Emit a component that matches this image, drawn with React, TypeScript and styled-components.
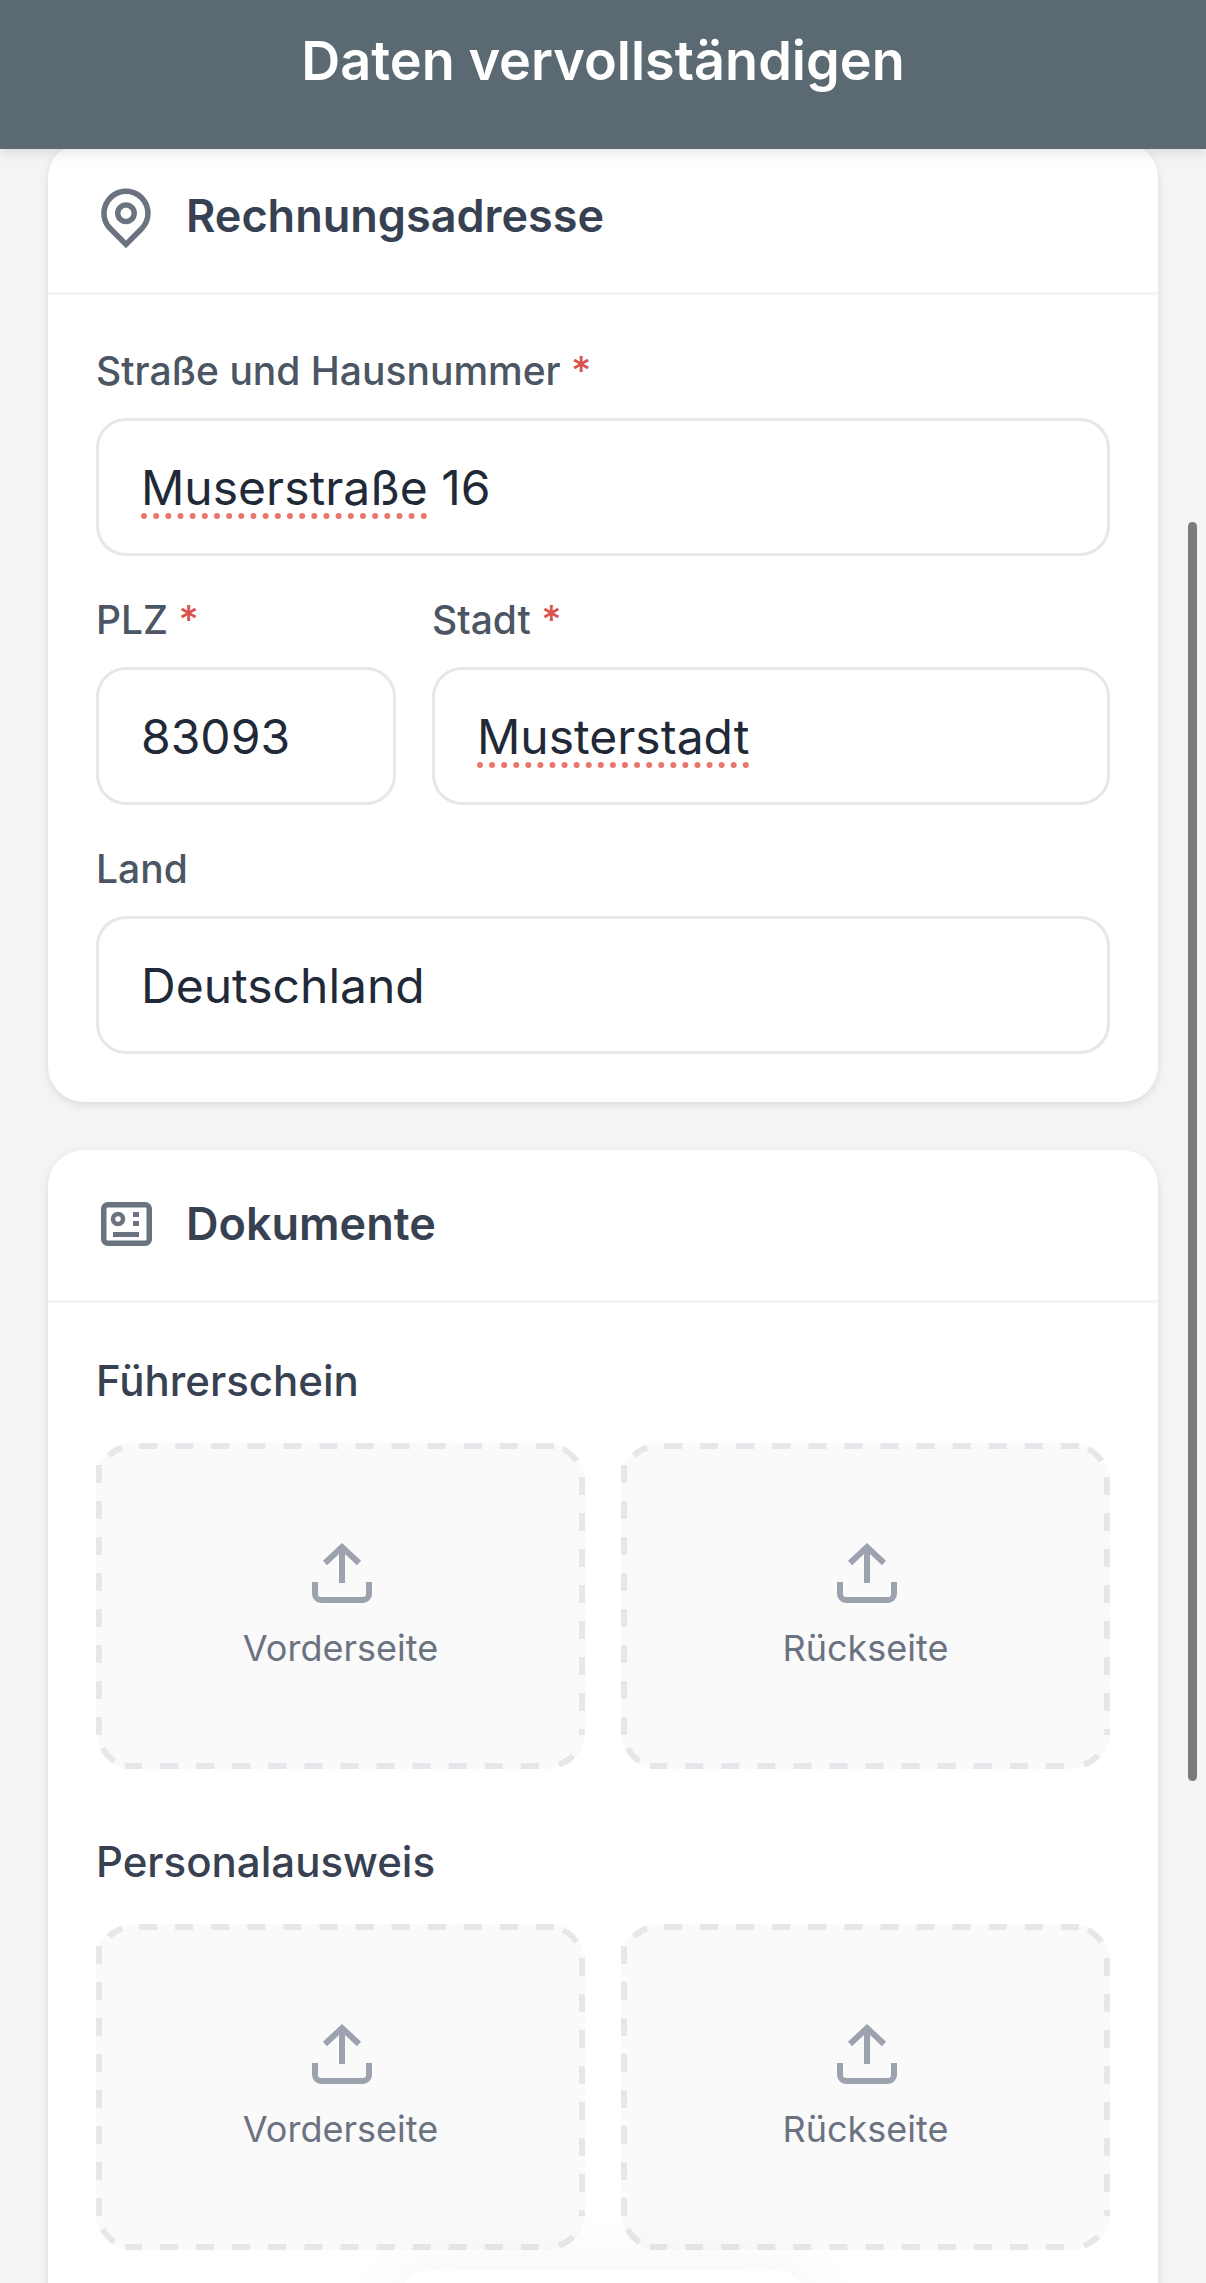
import styled, { createGlobalStyle } from "styled-components";
import { RiMapPinLine } from "react-icons/ri";

const GlobalStyle = createGlobalStyle`
  html, body {
    margin: 0;
    height: 2283px;
    overflow: hidden;
    background: #f3f4f6;
    font-family: Inter, "Noto Sans", sans-serif;
  }
  * { box-sizing: border-box; }
`;

const Page = styled.div`
  position: relative;
  width: 1206px;
  height: 2283px;
  overflow: hidden;
`;

const TopBar = styled.header`
  position: relative;
  z-index: 2;
  height: 149px;
  margin-bottom: -7px;
  padding-bottom: 29px;
  display: flex;
  align-items: center;
  justify-content: center;
  background: #5b6973;
  box-shadow: 0 3px 12px rgba(0, 0, 0, 0.12);
  color: #fff;
  font-size: 54px;
  font-weight: 600;
`;

const Content = styled.main`
  width: 1110px;
  margin-left: 48px;
  display: flex;
  flex-direction: column;
  gap: 48px;
`;

const Card = styled.section`
  background: #fff;
  border-radius: 36px;
  box-shadow: 0 3px 9px rgba(0, 0, 0, 0.1);
`;

const CardHeader = styled.div`
  height: 153px;
  padding: 0 48px 3px 45px;
  display: flex;
  align-items: center;
  gap: 27px;
  border-bottom: 3px solid #f3f4f6;
  color: #374151;
  font-size: 45px;
  font-weight: 600;
`;

const CardBody = styled.div`
  padding: 48px;
  display: flex;
  flex-direction: column;
`;

const Field = styled.div<{ $width?: number }>`
  display: flex;
  flex-direction: column;
  gap: 15px;
  flex: ${(p) => (p.$width ? `0 0 ${p.$width}px` : "1")};
`;

const FieldStack = styled.div`
  display: flex;
  flex-direction: column;
  gap: 36px;
`;

const FieldRow = styled.div`
  display: flex;
  gap: 36px;
`;

const Label = styled.label`
  height: 60px;
  line-height: 56px;
  color: #4b5563;
  font-size: 39px;
  font-weight: 500;
`;

const Required = styled.span`
  color: #d9534f;
`;

const InputBox = styled.div`
  height: 138px;
  padding: 0 42px;
  display: flex;
  align-items: center;
  border: 3px solid #e5e7eb;
  border-radius: 30px;
  background: #fff;
  color: #1f2937;
  font-size: 48px;
  white-space: pre;
`;

const Misspelled = styled.span`
  text-decoration: underline dotted #e8766b;
  text-decoration-thickness: 6px;
  text-underline-offset: 9px;
`;

const DocTitle = styled.h3`
  margin: 0 0 32px;
  height: 60px;
  line-height: 60px;
  color: #374151;
  font-size: 42px;
  font-weight: 500;
`;

const UploadRow = styled.div`
  display: grid;
  grid-template-columns: 1fr 1fr;
  gap: 36px;
  margin-bottom: 63px;
`;

const DropZone = styled.div`
  position: relative;
  height: 326px;
  display: flex;
  flex-direction: column;
  align-items: center;
  justify-content: center;
  gap: 22px;
  border-radius: 36px;
  background: #fafafb;
  color: #6b7280;
  font-size: 36px;
  line-height: 44px;
`;

const DashedEdge = styled.svg`
  position: absolute;
  inset: 0;
  width: 100%;
  height: 100%;
`;

const UploadGlyph = styled.svg`
  margin-left: 3px;
`;

const ScrollThumb = styled.div`
  position: absolute;
  z-index: 3;
  top: 522px;
  left: 1188px;
  width: 9px;
  height: 1259px;
  border-radius: 5px;
  background: #7b7b7b;
`;

const FloatingPill = styled.div`
  position: absolute;
  z-index: 3;
  top: 2269px;
  left: 395px;
  width: 416px;
  height: 80px;
  border-radius: 42px;
  background: #fff;
  box-shadow: 0 0 70px rgba(0, 0, 0, 0.05);
`;

// webkit lays its dashes out side by side, so each side and corner is its own piece
const EDGE =
  "M43 3H458M466 6.1A33 33 0 0 1 480 18.7M485 34V292M476 312.6A33 33 0 0 1 462 321.4" +
  "M442 323H29M18.5 318A33 33 0 0 1 6.6 305M3 292V22M13 12.4A33 33 0 0 1 26 4.6";

const UploadIcon = () => (
  <UploadGlyph width="60" height="62" viewBox="0 0 60 62" fill="none" stroke="#9ca3af" strokeWidth="6">
    <path d="M30 41V5M13 21 30 5l17 16" />
    <path d="M3 40v12a6 6 0 0 0 6 6h42a6 6 0 0 0 6-6V40" />
  </UploadGlyph>
);

const IdIcon = () => (
  <svg width="66" height="66" viewBox="0 0 66 66" fill="none" stroke="#6b7280">
    <rect x="10.75" y="13.75" width="45.5" height="38.5" rx="4" strokeWidth="5.5" />
    <circle cx="25" cy="28" r="5" strokeWidth="4.5" />
    <path d="M40 21h6v5h-6zM40 30h6v5h-6zM20 41h26v5H20z" fill="#6b7280" stroke="none" />
  </svg>
);

const Upload = ({ label }: { label: string }) => (
  <DropZone>
    <DashedEdge viewBox="0 0 488 326" preserveAspectRatio="none" fill="none">
      <path d={EDGE} stroke="#e5e7eb" strokeWidth="6" strokeDasharray="18 18" />
    </DashedEdge>
    <UploadIcon />
    {label}
  </DropZone>
);

const Doc = ({ title }: { title: string }) => (
  <>
    <DocTitle>{title}</DocTitle>
    <UploadRow>
      <Upload label="Vorderseite" />
      <Upload label="Rückseite" />
    </UploadRow>
  </>
);

export default function App() {
  return (
    <Page>
      <GlobalStyle />
      <TopBar>Daten vervollständigen</TopBar>
      <Content>
        <Card>
          <CardHeader>
            <RiMapPinLine size={66} color="#6b7280" />
            Rechnungsadresse
          </CardHeader>
          <CardBody>
            <FieldStack>
              <Field>
                <Label>
                  Straße und Hausnummer <Required>*</Required>
                </Label>
                <InputBox>
                  <Misspelled>Muserstraße</Misspelled> 16
                </InputBox>
              </Field>
              <FieldRow>
                <Field $width={300}>
                  <Label>
                    PLZ <Required>*</Required>
                  </Label>
                  <InputBox>83093</InputBox>
                </Field>
                <Field>
                  <Label>
                    Stadt <Required>*</Required>
                  </Label>
                  <InputBox>
                    <Misspelled>Musterstadt</Misspelled>
                  </InputBox>
                </Field>
              </FieldRow>
              <Field>
                <Label>Land</Label>
                <InputBox>Deutschland</InputBox>
              </Field>
            </FieldStack>
          </CardBody>
        </Card>
        <Card>
          <CardHeader>
            <IdIcon />
            Dokumente
          </CardHeader>
          <CardBody>
            <Doc title="Führerschein" />
            <Doc title="Personalausweis" />
          </CardBody>
        </Card>
      </Content>
      <ScrollThumb />
      <FloatingPill />
    </Page>
  );
}
